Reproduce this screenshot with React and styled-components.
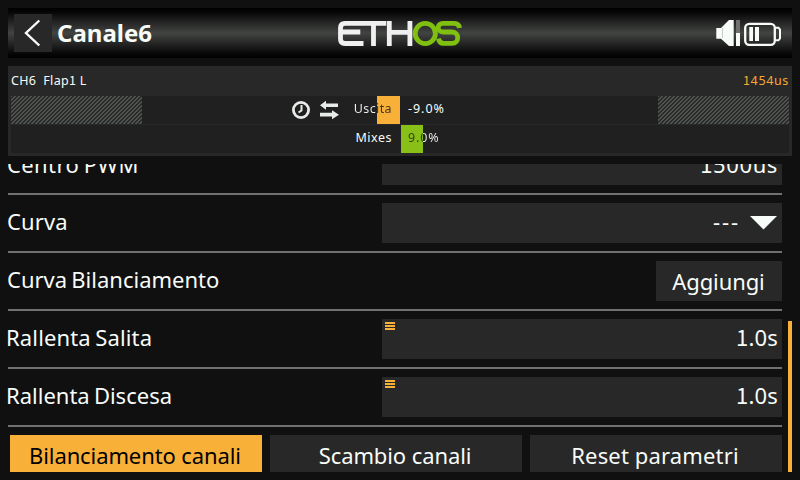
import React from 'react';
import styled, { createGlobalStyle } from 'styled-components';

const Global = createGlobalStyle`
  * { box-sizing: border-box; }
  body { margin: 0; background: #101010; overflow: hidden; }
`;

const Screen = styled.div`
  width: 800px;
  height: 480px;
  padding: 8px;
  display: flex;
  flex-direction: column;
  gap: 8px;
  background: #101010;
  color: #f8fcf8;
  font-family: 'Noto Sans', 'Open Sans', sans-serif;
  white-space: pre;
`;

const Header = styled.header`
  height: 50px;
  flex: none;
  display: grid;
  grid-template-columns: 330px 1fr 76px;
  align-items: center;
  background: linear-gradient(#000 0%, #060606 8%, #424442 50%, #060606 92%, #000 100%);
`;

const TitleGroup = styled.div`
  display: flex;
  align-items: center;
  padding-left: 6px;
`;

const BackButton = styled.button`
  width: 38px;
  height: 38px;
  padding: 0;
  border: 0;
  background: #282828;
  svg { display: block; }
`;

const Title = styled.h1`
  margin: 0 0 0 5px;
  font-size: 24px;
  line-height: 38px;
  font-weight: 700;
`;

/* The digit one is set in a face whose glyph has a foot serif. */
const FootedOne = styled.span`
  font-family: 'Noto Sans CJK SC', sans-serif;
  line-height: 0;
`;

const Panel = styled.section`
  height: 90px;
  flex: none;
  padding: 0 3px 3px;
  display: flex;
  flex-direction: column;
  background: #282828;
`;

const PanelHead = styled.div`
  height: 30px;
  display: flex;
  justify-content: space-between;
  font-size: 12.5px;
  line-height: 29px;
`;

const Small = styled.span`
  letter-spacing: ${(p) => p.$track || 0}px;
  color: ${(p) => p.$color || 'inherit'};
`;

const Meter = styled.div`
  height: 28px;
  margin-bottom: 1px;
  display: grid;
  grid-template-columns: 131px 235px 23px 1px 22px 235px 131px;
  background: #202020;
  &:last-child { margin-bottom: 0; }
`;

const Hatch = styled.div`
  grid-area: 1 / ${(p) => p.$col};
  background: repeating-linear-gradient(135deg, #505450 0 1.414px, #282828 1.414px 2.828px);
`;

const Fill = styled.div`
  grid-area: 1 / ${(p) => p.$col};
  background: ${(p) => p.$color};
`;

const MeterText = styled.div`
  grid-area: 1 / 1 / 2 / -1;
  z-index: 1;
  display: grid;
  grid-template-columns: 381px 1fr;
  grid-template-rows: 28px;
  column-gap: 16px;
  align-items: start;
  font-size: 12.5px;
  line-height: 25px;
`;

const MeterLabel = styled.div`
  display: flex;
  justify-content: flex-end;
  align-items: flex-start;
`;

const MeterIcons = styled.div`
  height: 28px;
  margin-right: 15px;
  display: flex;
  align-items: center;
  gap: 10px;
  svg { display: block; }
`;

const SplitText = styled.span`
  letter-spacing: ${(p) => p.$track || 0}px;
  justify-self: start;
  color: transparent;
  background: linear-gradient(90deg, ${(p) => p.$from} ${(p) => p.$at}px, ${(p) => p.$to} ${(p) => p.$at}px);
  background-clip: text;
`;

const Body = styled.main`
  height: 308px;
  flex: none;
  margin-left: -2px;
  padding-left: 2px;
  display: grid;
  grid-template-columns: 774px 4px;
  justify-content: space-between;
  overflow: hidden;
`;

const List = styled.div`
  margin-top: -27px;
`;

const Row = styled.div`
  height: 58px;
  padding: 8px 0;
  display: flex;
  justify-content: space-between;
  border-bottom: 2px solid #707070;
  font-size: 22px;
  line-height: ${(p) => p.$line || 37}px;
`;

const Label = styled.span`
  margin-left: ${(p) => (p.$outdent ? -2 : -1)}px;
  letter-spacing: ${(p) => p.$track || 0}px;
  word-spacing: ${(p) => p.$word ?? -1.5}px;
`;

const Field = styled.div`
  width: 400px;
  height: 40px;
  padding: 0 4px 0 3px;
  display: flex;
  background: #282828;
`;

const MenuMark = styled.i`
  width: 10px;
  height: 8px;
  margin-top: 3px;
  background: linear-gradient(#f8b038 2px, transparent 2px 3px, #f8b038 3px 5px, transparent 5px 6px, #f8b038 6px);
`;

const Value = styled.span`
  margin-left: auto;
  letter-spacing: ${(p) => p.$track || 0}px;
`;

const Arrow = styled.svg`
  margin: 13px 1px 0 10px;
`;

const AddButton = styled.button`
  width: 126px;
  height: 40px;
  padding: 0 1px 0 0;
  border: 0;
  background: #282828;
  color: inherit;
  font: inherit;
  line-height: 40px;
  letter-spacing: ${(p) => p.$track || 0}px;
`;

const Actions = styled.div`
  display: grid;
  grid-template-columns: repeat(3, 252px);
  column-gap: 8px;
  padding: 8px 0 0 2px;
`;

const Action = styled.button`
  height: 40px;
  padding: 0 2px 0 0;
  border: 0;
  background: ${(p) => (p.$active ? '#f8b038' : '#282828')};
  color: ${(p) => (p.$active ? '#000' : '#f8fcf8')};
  font: 22px/40px 'Noto Sans', sans-serif;
  letter-spacing: ${(p) => p.$track || 0}px;
`;

const ScrollBar = styled.div`
  margin-top: 157px;
  background: #f8b038;
`;

const Logo = () => (
  <svg width="130" height="50" viewBox="338 8 130 50" fill="none" strokeWidth="4.8">
    <g stroke="#f0f0f0">
      <path d="M386.300 23.400H345Q340.500 23.400 340.500 28V39Q340.500 43.500 345 43.500H363.500M341 32H360.300M373.500 23V46M389.300 21V46M409.900 21V46M390 32.300H410" />
    </g>
    <g stroke="#80c010">
      <circle cx="425.300" cy="33.500" r="10.100" />
      <path d="M459.500 28C459 24.500 457 23.400 454.500 23.400H443C436.500 23.400 436.500 32 443 32H452C459.600 32 459.600 43.400 452 43.400H443.500C440.500 43.400 439 41.500 438.500 38.500" />
    </g>
  </svg>
);

const Status = () => (
  <svg width="66" height="50" viewBox="716 8 66 50">
    <path fill="#f8fcf8" d="M716.300 28H721L729 20H733.700V46H729L721 38.700H716.300Z" />
    <path stroke="#c8ccc8" d="M722.500 28V38" />
    <path fill="#707070" d="M736 20H740V33H736Z" />
    <path fill="#f8fcf8" d="M736 33H740V46H736ZM749.300 27H753V41H749.300ZM755 27H759V41H755Z" />
    <rect x="745.200" y="23.800" width="29.600" height="21" rx="4" fill="none" stroke="#f8fcf8" strokeWidth="2.300" />
    <path fill="none" stroke="#f8fcf8" strokeWidth="2" d="M775 27.700H778.500L780 29.500V38.500L778.500 40.300H775" />
  </svg>
);

const Clock = () => (
  <svg width="18" height="18" viewBox="0 0 18 18" fill="none" stroke="#e8ece8">
    <circle cx="9" cy="9" r="7.600" strokeWidth="2.800" />
    <path strokeWidth="2" d="M9.500 4V9.500L6.500 11.500" />
  </svg>
);

const Swap = () => (
  <svg width="19" height="20" viewBox="0 0 19 20" fill="#e8ece8">
    <path d="M0 5.200L6 0.700V3.400H18V7H6V9.700ZM19 14.700L12 10.200V12.800H0V16.400H12V19.200Z" />
  </svg>
);

export default function App() {
  return (
    <Screen>
      <Global />
      <Header>
        <TitleGroup>
          <BackButton aria-label="Indietro">
            <svg width="38" height="38" fill="none" stroke="#f8fcf8" strokeWidth="2.400">
              <path d="M25.300 6.500L12 19L25.300 31.500" />
            </svg>
          </BackButton>
          <Title>Canale6</Title>
        </TitleGroup>
        <Logo />
        <Status />
      </Header>
      <Panel>
        <PanelHead>
          <Small $track={0.3}>CH6  Flap<FootedOne>1</FootedOne> L</Small>
          <Small $track={0.65} $color="#f8a830"><FootedOne>1</FootedOne>454us</Small>
        </PanelHead>
        <Meter>
          <Hatch $col={1} />
          <Fill $col={3} $color="#f8b038" />
          <Hatch $col={7} />
          <MeterText>
            <MeterLabel>
              <MeterIcons>
                <Clock />
                <Swap />
              </MeterIcons>
              <SplitText $track={0.4} $from="#f0f4f0" $to="#403820" $at={23}>Uscita</SplitText>
            </MeterLabel>
            <Small $track={0.95}>-9.0%</Small>
          </MeterText>
        </Meter>
        <Meter>
          <Fill $col={5} $color="#88c018" />
          <MeterText>
            <MeterLabel><Small $track={0.5}>Mixes</Small></MeterLabel>
            <SplitText $track={0.9} $from="#304010" $to="#f0f4f0" $at={15}>9.0%</SplitText>
          </MeterText>
        </Meter>
      </Panel>
      <Body>
        <List>
          <Row $line={39}>
            <Label $track={0.4}>Centro PWM</Label>
            <Field><Value $track={0.6}><FootedOne>1</FootedOne>500us</Value></Field>
          </Row>
          <Row>
            <Label $track={0.15}>Curva</Label>
            <Field>
              <Value $track={1.9}>---</Value>
              <Arrow width="27" height="14"><path d="M0 0H27L13.500 13.500Z" fill="#f8fcf8" /></Arrow>
            </Field>
          </Row>
          <Row>
            <Label $track={0}>Curva Bilanciamento</Label>
            <AddButton $track={-0.1}>Aggiungi</AddButton>
          </Row>
          <Row>
            <Label $outdent $track={0.15}>Rallenta Salita</Label>
            <Field><MenuMark /><Value $track={0.2}><FootedOne>1</FootedOne>.0s</Value></Field>
          </Row>
          <Row>
            <Label $outdent $track={0}>Rallenta Discesa</Label>
            <Field><MenuMark /><Value $track={0.2}><FootedOne>1</FootedOne>.0s</Value></Field>
          </Row>
          <Actions>
            <Action $active $track={-0.1}>Bilanciamento canali</Action>
            <Action $track={-0.1}>Scambio canali</Action>
            <Action $track={0.15}>Reset parametri</Action>
          </Actions>
        </List>
        <ScrollBar />
      </Body>
    </Screen>
  );
}
